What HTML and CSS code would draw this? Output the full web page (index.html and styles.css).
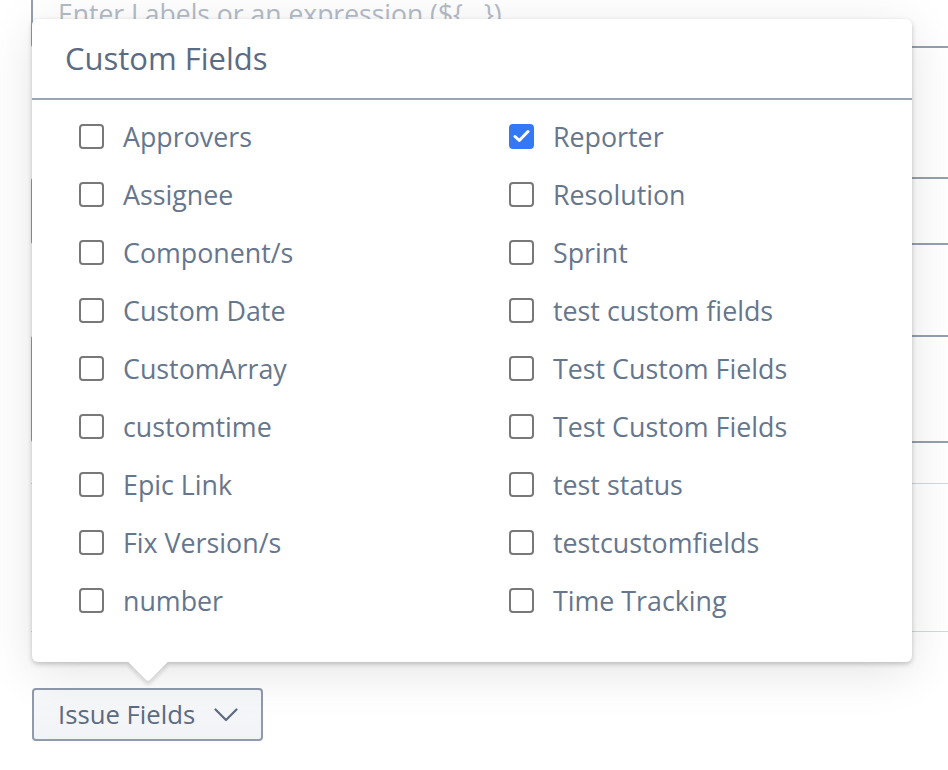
FILE: index.html
```html
<!DOCTYPE html>
<html lang="en">
<head>
<meta charset="utf-8">
<title>Custom Fields</title>
<link rel="stylesheet" href="styles.css">
</head>
<body>
<div class="page">
  <div class="field field-top"><span class="placeholder">Enter Labels or an expression (${...})</span></div>
  <div class="field field-mid"></div>
  <div class="field field-tall"></div>
  <div class="sep sep-a"></div>
  <div class="sep sep-b"></div>
  <button class="issue-btn" type="button">
    <span>Issue Fields</span>
    <svg class="chev" width="24" height="14" viewBox="0 0 24 14"><path d="M1.5 1.5 L12 12 L22.5 1.5" fill="none" stroke="#5b6b82" stroke-width="2.2" stroke-linecap="round" stroke-linejoin="round"/></svg>
  </button>

  <div class="popover">
    <div class="pop-head">Custom Fields</div>
    <div class="pop-body">
      <label class="item"><span class="box"></span><span class="lbl">Approvers</span></label>
      <label class="item"><span class="box"></span><span class="lbl">Assignee</span></label>
      <label class="item"><span class="box"></span><span class="lbl">Component/s</span></label>
      <label class="item"><span class="box"></span><span class="lbl">Custom Date</span></label>
      <label class="item"><span class="box"></span><span class="lbl">CustomArray</span></label>
      <label class="item"><span class="box"></span><span class="lbl">customtime</span></label>
      <label class="item"><span class="box"></span><span class="lbl">Epic Link</span></label>
      <label class="item"><span class="box"></span><span class="lbl">Fix Version/s</span></label>
      <label class="item"><span class="box"></span><span class="lbl">number</span></label>
      <label class="item"><span class="box checked"><svg width="17" height="14" viewBox="0 0 17 14"><path d="M2 7.5 L6.3 11.5 L15 2.5" fill="none" stroke="#fff" stroke-width="3" stroke-linecap="round" stroke-linejoin="round"/></svg></span><span class="lbl">Reporter</span></label>
      <label class="item"><span class="box"></span><span class="lbl">Resolution</span></label>
      <label class="item"><span class="box"></span><span class="lbl">Sprint</span></label>
      <label class="item"><span class="box"></span><span class="lbl">test custom fields</span></label>
      <label class="item"><span class="box"></span><span class="lbl">Test Custom Fields</span></label>
      <label class="item"><span class="box"></span><span class="lbl">Test Custom Fields</span></label>
      <label class="item"><span class="box"></span><span class="lbl">test status</span></label>
      <label class="item"><span class="box"></span><span class="lbl">testcustomfields</span></label>
      <label class="item"><span class="box"></span><span class="lbl">Time Tracking</span></label>
    </div>
  </div>
</div>
</body>
</html>
```

FILE: styles.css
```css
* { box-sizing: border-box; }
html, body { margin: 0; padding: 0; background: #fff; overflow: hidden; }
body { width: 948px; height: 770px; font-family: "Open Sans", "Noto Sans", sans-serif; color: #5b6b82; }

.page {
  position: relative;
  width: 948px;
  height: 770px;
  padding-left: 31px;
  display: flex;
  flex-direction: column;
  align-items: flex-start;
}

.field {
  width: 960px;
  border: 2px solid #949fb0;
  border-right: none;
  border-radius: 4px 0 0 4px;
  background: #fff;
}
.field-top {
  margin-top: -31px;
  height: 79px;
  padding: 26px 0 0 25px;
}
.placeholder {
  font-size: 26.5px;
  color: #b3bbc7;
  line-height: 34px;
  white-space: nowrap;
}
.field-mid { margin-top: 129px; height: 68px; }
.field-tall { margin-top: 90px; height: 108px; }

.sep {
  width: 960px;
  height: 1px;
  background: #d3d7de;
}
.sep-a { margin-top: 40px; }
.sep-b { margin-top: 147px; }

.issue-btn {
  margin-top: 56px;
  margin-left: 1px;
  width: 231px;
  height: 53px;
  border: 2px solid #8f9aab;
  border-radius: 4px;
  background: linear-gradient(#f7f8fa, #f1f3f6);
  display: flex;
  align-items: center;
  padding: 0 0 1px 24px;
  gap: 19px;
  font-family: inherit;
  font-size: 25.7px;
  color: #5b6b82;
}
.chev { display: block; margin-top: 2px; }

.popover {
  position: absolute;
  left: 32px;
  top: 19px;
  width: 880px;
  height: 643px;
  background: #fff;
  border-radius: 6px;
  box-shadow: 0 2px 5px rgba(0,0,0,0.22), 0 10px 48px rgba(0,0,0,0.11);
}
.popover::after {
  content: "";
  position: absolute;
  left: 102px;
  top: 629px;
  width: 28px;
  height: 28px;
  background: #fff;
  transform: rotate(45deg);
  border-bottom-right-radius: 3px;
  box-shadow: 3px 3px 4px rgba(0,0,0,0.12);
}

.pop-head {
  height: 81px;
  border-bottom: 2px solid #9aa5b5;
  padding-left: 33px;
  display: flex;
  align-items: center;
  font-size: 31px;
  font-weight: 500;
  color: #5b6b82;
  padding-bottom: 2px;
}

.pop-body {
  position: relative;
  z-index: 1;
  padding: 7px 0 0 47px;
  display: grid;
  grid-template-columns: 430px 430px;
  grid-template-rows: repeat(9, 58px);
  grid-auto-flow: column;
}

.item {
  display: flex;
  align-items: center;
  gap: 19px;
  font-size: 26.8px;
  color: #66768c;
}
.box {
  width: 25px;
  height: 25px;
  border: 2px solid #787878;
  border-radius: 4px;
  flex: none;
  display: flex;
  align-items: center;
  justify-content: center;
}
.box.checked {
  background: #3478f6;
  border-color: #3478f6;
}
.lbl { white-space: nowrap; }
```
